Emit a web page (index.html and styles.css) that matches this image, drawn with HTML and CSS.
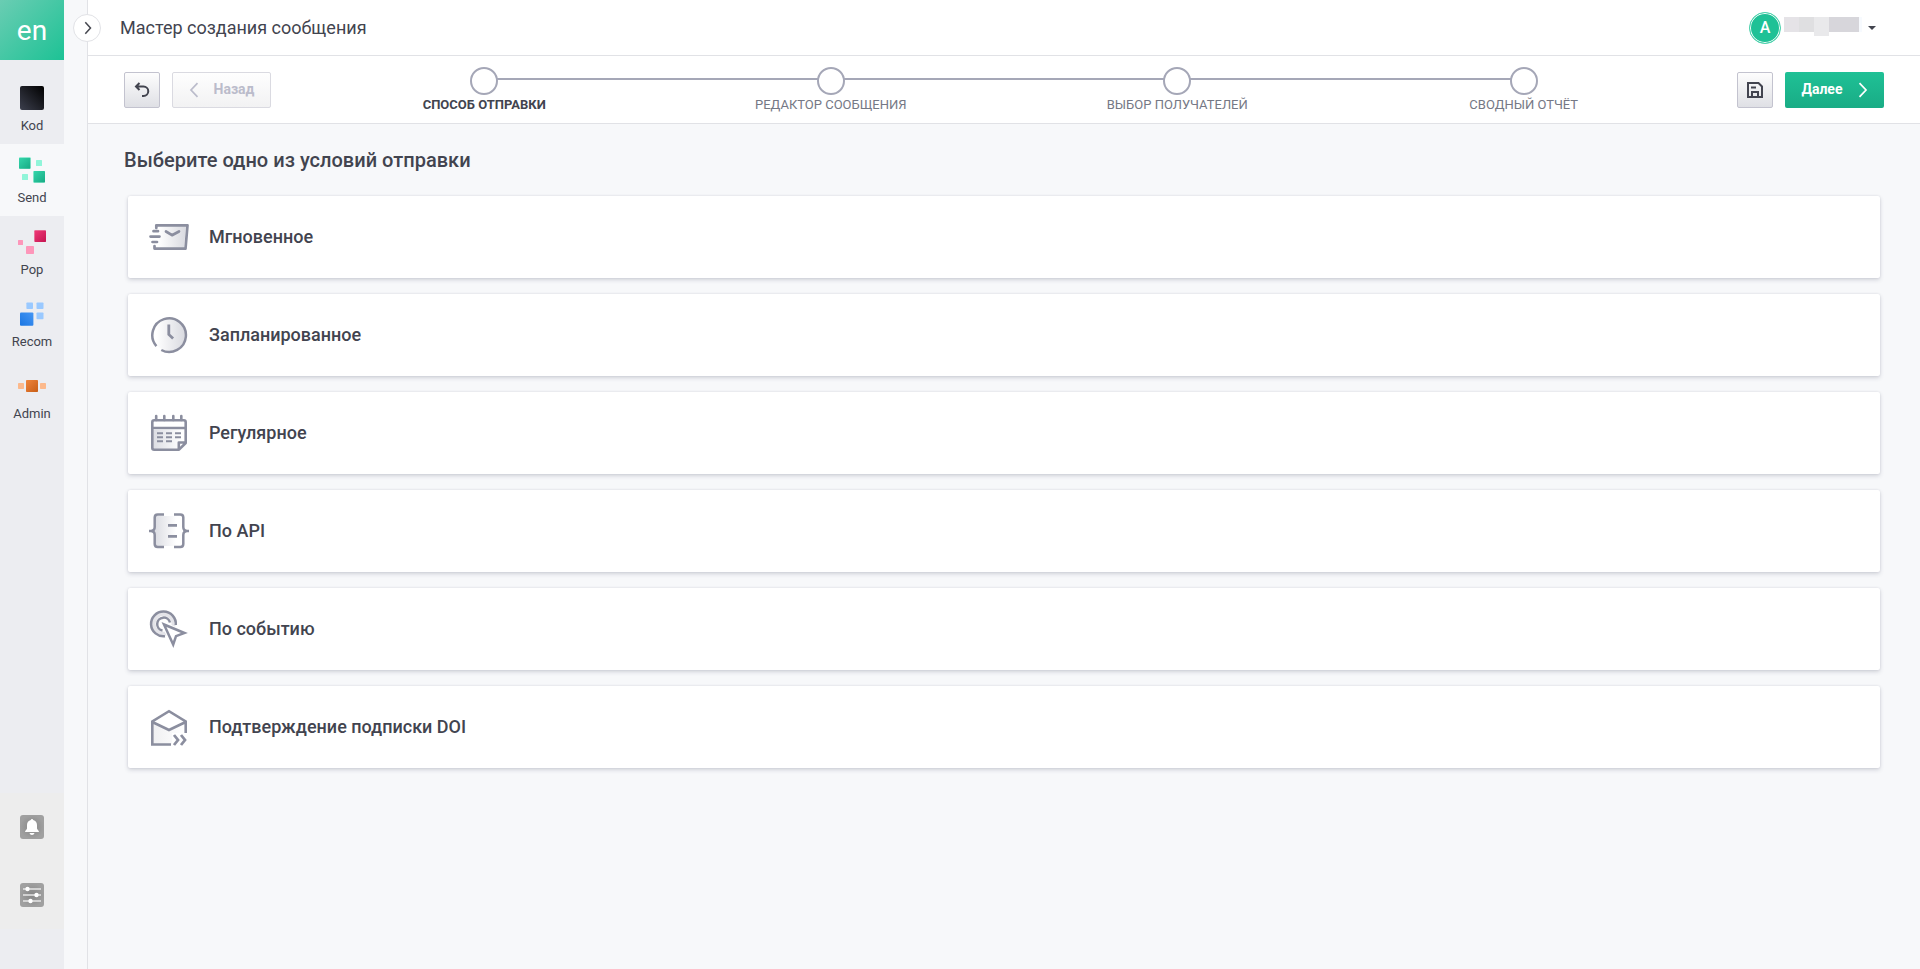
FILE: index.html
```html
<!DOCTYPE html>
<html lang="ru">
<head>
  <meta charset="UTF-8">
  <meta name="viewport" content="width=device-width, initial-scale=1.0">
  <title>Мастер создания сообщения</title>
  <link rel="stylesheet" href="styles.css">
</head>
<body>
  <!-- shared gradients -->
  <svg class="defs" width="0" height="0">
    <defs>
      <linearGradient id="fade-right"><stop offset="0.1" stop-color="#fff"/><stop offset="1" stop-color="#d9dae0"/></linearGradient>
      <linearGradient id="fade-left"><stop offset="0" stop-color="#dcdde3"/><stop offset="0.9" stop-color="#fff"/></linearGradient>
      <linearGradient id="fade-soft"><stop offset="0" stop-color="#f0f0f2"/><stop offset="1" stop-color="#fff"/></linearGradient>
      <linearGradient id="black" x1="0" y1="1" x2="1" y2="0"><stop offset="0" stop-color="#3c3f4d"/><stop offset="1" stop-color="#000"/></linearGradient>
      <linearGradient id="green" x1="0" y1="0" x2="1" y2="1"><stop offset="0" stop-color="#35d6ab"/><stop offset="1" stop-color="#17ab84"/></linearGradient>
      <linearGradient id="pink" x1="0" y1="0" x2="1" y2="1"><stop offset="0" stop-color="#f03a78"/><stop offset="1" stop-color="#c41450"/></linearGradient>
      <linearGradient id="blue" x1="0" y1="1" x2="1" y2="0"><stop offset="0" stop-color="#1a76e2"/><stop offset="1" stop-color="#4596f4"/></linearGradient>
      <linearGradient id="orange" x1="0" y1="0" x2="1" y2="1"><stop offset="0" stop-color="#ef843c"/><stop offset="1" stop-color="#c85e17"/></linearGradient>
      <radialGradient id="gray"><stop offset="0" stop-color="#868686"/><stop offset="1" stop-color="#a0a0a0"/></radialGradient>
    </defs>
  </svg>

  <aside class="sidebar">
    <a href="#" class="logo">en</a>
    <nav class="products">
      <a href="#" class="product">
        <svg width="28" height="28" viewBox="0 0 28 28"><rect x="2" y="2" width="24" height="24" rx="2" fill="url(#black)"/></svg>
        <span>Kod</span>
      </a>
      <a href="#" class="product active">
        <svg width="28" height="28" viewBox="0 0 28 28">
          <g fill="#b5f5e3"><rect x="1" y="1" width="12" height="12" rx="1"/><rect x="15" y="15" width="12" height="12" rx="1"/></g>
          <g fill="#90f5d9"><rect x="18" y="4" width="6" height="6" rx=".5"/><rect x="4" y="18" width="6" height="6" rx=".5"/></g>
          <g fill="url(#green)"><rect x="1" y="1.7" width="11.4" height="11" rx=".7"/><rect x="15.6" y="15" width="11.4" height="11.4" rx=".7"/></g>
        </svg>
        <span>Send</span>
      </a>
      <a href="#" class="product">
        <svg width="28" height="28" viewBox="0 0 28 28">
          <rect x="16" y="2" width="12" height="12" rx="1" fill="#e9a0b8"/>
          <rect x="16.6" y="2.6" width="11.4" height="11.4" rx=".7" fill="url(#pink)"/>
          <g fill="#fd96ba"><rect y="12" width="5" height="5" rx=".5"/><rect x="8" y="18" width="8" height="8" rx=".7"/></g>
        </svg>
        <span>Pop</span>
      </a>
      <a href="#" class="product">
        <svg width="28" height="28" viewBox="0 0 28 28">
          <g fill="#9ac9ff"><rect x="8.4" y="2.4" width="6.6" height="6.6" rx=".8"/><rect x="18.5" y="2.4" width="7" height="6.6" rx=".8"/><rect x="18.5" y="12.5" width="7" height="6.8" rx=".8"/></g>
          <rect x="2" y="12.5" width="13.4" height="13.3" rx="1" fill="url(#blue)"/>
        </svg>
        <span>Recom</span>
      </a>
      <a href="#" class="product">
        <svg width="28" height="28" viewBox="0 0 28 28">
          <g fill="#fcb98c"><rect y="11" width="6" height="6" rx=".7"/><rect x="22" y="11" width="6" height="6" rx=".7"/></g>
          <rect x="8" y="8" width="12" height="12" rx=".8" fill="url(#orange)"/>
        </svg>
        <span>Admin</span>
      </a>
    </nav>
    <div class="tools">
      <a href="#" class="tool">
        <svg width="24" height="24" viewBox="0 0 24 24">
          <rect width="24" height="24" rx="3" fill="url(#gray)"/>
          <path d="M12 4a1.2 1.2 0 0 1 1.2 1.1C15.6 5.700 17 7.500 17 10v3.500c0 1 2 2 2 3.500H5c0-1.500 2-2.500 2-3.500V10c0-2.500 1.400-4.300 3.800-4.900A1.200 1.200 0 0 1 12 4zM9.500 18h5c-.3 1.300-1.300 2-2.500 2s-2.200-.7-2.500-2z" fill="#fff"/>
        </svg>
      </a>
      <a href="#" class="tool">
        <svg width="24" height="24" viewBox="0 0 24 24">
          <rect width="24" height="24" rx="3" fill="url(#gray)"/>
          <path d="M3 6h18M3 12h18M3 18h18" stroke="#e6e6e6" stroke-width="1.600"/>
          <g fill="#fff"><circle cx="7.500" cy="6" r="2.200"/><circle cx="16.500" cy="12" r="2.200"/><circle cx="10.500" cy="18" r="2.200"/></g>
        </svg>
      </a>
    </div>
  </aside>

  <div class="submenu">
    <button class="expand" type="button">
      <svg width="8" height="14" viewBox="0 0 8 14"><path d="M1.300 1.200L6.500 7l-5.200 5.800" fill="none" stroke="#45474f" stroke-width="1.500"/></svg>
    </button>
  </div>

  <div class="page">
    <header class="header">
      <h1>Мастер создания сообщения</h1>
      <div class="user">
        <span class="avatar">A</span>
        <svg class="user-name" width="78" height="20" viewBox="0 0 78 20">
          <rect width="15" height="15" fill="#e5e3e7"/>
          <rect x="15" width="15" height="15" fill="#dfdfe1"/>
          <rect x="30" width="15" height="19" fill="#e9e9eb"/>
          <rect x="45" width="30" height="15" fill="#d7d6db"/>
          <rect x="75" width="3" height="15" fill="#f7fafe"/>
        </svg>
        <span class="caret"></span>
      </div>
    </header>

    <div class="toolbar">
      <button class="btn btn-icon" type="button">
        <svg width="16" height="16" viewBox="0 0 16 16"><path d="M5.500 1L2 4.500 5.500 8M2.300 4.500h7.200a4.700 4.700 0 0 1 0 9.500H8" fill="none" stroke="#42444f" stroke-width="2"/></svg>
      </button>
      <button class="btn btn-back" type="button" disabled>
        <svg width="10" height="16" viewBox="0 0 10 16"><path d="M8.500 1.200L2 8l6.500 6.800" fill="none" stroke="#bbbccb" stroke-width="1.700"/></svg>
        <span>Назад</span>
      </button>
      <ol class="steps">
        <li class="step current">Способ отправки</li>
        <li class="step">Редактор сообщения</li>
        <li class="step">Выбор получателей</li>
        <li class="step">Сводный отчёт</li>
      </ol>
      <button class="btn btn-icon btn-save" type="button">
        <svg width="16" height="16" viewBox="0 0 16 16">
          <path d="M1 1h10.500L15 4.500V15H1z" fill="none" stroke="#42444f" stroke-width="2"/>
          <path d="M4 5.500h5M5 15v-5h6v5" fill="none" stroke="#42444f" stroke-width="2"/>
        </svg>
      </button>
      <button class="btn btn-next" type="button">
        <span>Далее</span>
        <svg width="10" height="16" viewBox="0 0 10 16"><path d="M1.500 1.200L8 8l-6.500 6.800" fill="none" stroke="#fff" stroke-width="1.700"/></svg>
      </button>
    </div>

    <main class="content">
      <h2>Выберите одно из условий отправки</h2>
      <div class="cards">
        <a href="#" class="card">
          <svg class="icon" viewBox="0 0 40 40">
            <path d="M7.500 8.500H37L35 31.500H6z" fill="url(#fade-right)"/>
            <path d="M7.300 11V8.300h31.200L36.500 31.600H5.500V29M4.500 14.200h4.500M1.500 19.600h9M3.500 25h4.500M17 14.500l6 3.700 7-3.700" fill="none" stroke="#8b8e9f" stroke-width="2.700" stroke-linecap="round" stroke-linejoin="round"/>
          </svg>
          <span>Мгновенное</span>
        </a>
        <a href="#" class="card">
          <svg class="icon" viewBox="0 0 40 40">
            <circle cx="20" cy="20" r="16" fill="url(#fade-right)"/>
            <path d="M7.400 31.100A16.800 16.800 0 1 1 12.300 35" fill="none" stroke="#8b8e9f" stroke-width="2.500"/>
            <path d="M19.800 9.500v10l4.300 4" fill="none" stroke="#8b8e9f" stroke-width="2.800"/>
          </svg>
          <span>Запланированное</span>
        </a>
        <a href="#" class="card">
          <svg class="icon" viewBox="0 0 40 40">
            <path d="M4 17h32v12l-6 7H4z" fill="url(#fade-left)"/>
            <path d="M3.300 9.200q0-1.900 1.900-1.900h29.600q1.900 0 1.900 1.900V30l-6.700 6.700H5.200q-1.900 0-1.900-1.900zM3.300 15h33.400M36.500 29.500h-6.700v7" fill="none" stroke="#8b8e9f" stroke-width="2.600" stroke-linejoin="round"/>
            <path d="M7.200 3v4M15.300 3v4M24.300 3v4M32.300 3v4" stroke="#8b8e9f" stroke-width="2.600" stroke-linecap="round"/>
            <path d="M8 20.300h6M17 20.300h6M26 20.300h6M8 24.300h6M17 24.300h6M26 24.300h6M8 28.300h6M17 28.300h6" stroke="#8b8e9f" stroke-width="1.900"/>
          </svg>
          <span>Регулярное</span>
        </a>
        <a href="#" class="card">
          <svg class="icon" viewBox="0 0 40 40">
            <path d="M6 5h24v30H6z" fill="url(#fade-left)"/>
            <path d="M15 3.500H8.700q-3 0-3 3V16q0 4-4 4 4 0 4 4v9q0 3 3 3H15M25 3.500h6.300q3 0 3 3V16q0 4 4 4-4 0-4 4v9q0 3-3 3H25M0 20h3M37 20h3" fill="none" stroke="#8b8e9f" stroke-width="2.500"/>
            <path d="M19 14.300h9M19 25.300h9" stroke="#8b8e9f" stroke-width="2.800"/>
          </svg>
          <span>По API</span>
        </a>
        <a href="#" class="card">
          <svg class="icon" viewBox="0 0 40 40">
            <circle cx="14.600" cy="14.800" r="10" fill="none" stroke="#e4e4e9" stroke-width="4"/>
            <path d="M16 27.200A12.400 12.400 0 1 1 26.800 16M13.500 21.500A6.500 6.500 0 1 1 21 13.500" fill="none" stroke="#8b8e9f" stroke-width="2.500"/>
            <path d="M14.500 15L24.200 36.500 27 27.200 36.500 24z" fill="#fff" stroke="#fff" stroke-width="4"/>
            <path d="M15 15.500L24.200 35.500 27 27.200 35.500 24z" fill="#fff" stroke="#8b8e9f" stroke-width="2.500"/>
          </svg>
          <span>По событию</span>
        </a>
        <a href="#" class="card">
          <svg class="icon" viewBox="0 0 40 40">
            <path d="M4 15l16 8 15-8v11H23v11H4z" fill="url(#fade-soft)"/>
            <path d="M22 37.500H3.300V14.500L20 4.200l16.700 10.300V26M3.300 15L20 23l16.700-8" fill="none" stroke="#8b8e9f" stroke-width="2.600"/>
            <path d="M25 28l4 5-4 5M32 28l4 5-4 5" fill="none" stroke="#8b8e9f" stroke-width="2.800"/>
          </svg>
          <span>Подтверждение подписки DOI</span>
        </a>
      </div>
    </main>
  </div>
</body>
</html>
```
FILE: styles.css
```css
* {
  padding: 0;
  margin: 0;
  box-sizing: border-box;
}
body {
  display: flex;
  height: 100vh;
  font-family: Roboto, "Liberation Sans", sans-serif;
  color: #42444f;
  background-color: #f7f8fa;
}
a {
  color: inherit;
  text-decoration: none;
}
svg {
  flex: none;
}
.defs {
  position: absolute;
}

/* sidebar */
.sidebar {
  display: flex;
  flex-direction: column;
  width: 64px;
  background-color: #ecedf1;
}
.logo {
  height: 60px;
  line-height: 61px;
  text-align: center;
  font-size: 28px;
  color: #fff;
  background: linear-gradient(135deg, #6acdb3, #1dc295);
}
.products {
  margin-top: 12px;
}
.product {
  display: flex;
  flex-direction: column;
  align-items: center;
  height: 72px;
  padding-top: 12px;
  font-size: 13px;
  line-height: 16px;
}
.product span {
  margin-top: 6px;
}
.product.active {
  background-color: #f7f8fa;
}
.tools {
  margin-top: auto;
  margin-bottom: 40px;
  background-color: #ededed;
}
.tool {
  display: flex;
  justify-content: center;
  align-items: center;
  height: 68px;
}
.submenu {
  position: relative;
  width: 24px;
  border-right: 1px solid #e1e2e6;
}
.expand {
  position: absolute;
  top: 14px;
  left: 9px;
  width: 28px;
  height: 28px;
  display: flex;
  justify-content: center;
  align-items: center;
  padding-left: 1px;
  border: 1px solid #e1e2e6;
  border-radius: 50%;
  background-color: #fff;
}

/* header */
.page {
  flex: 1;
}
.header {
  display: flex;
  align-items: center;
  justify-content: space-between;
  height: 56px;
  padding: 0 44px 0 32px;
  background-color: #fff;
  border-bottom: 1px solid #e1e2e6;
}
.header h1 {
  font-size: 18px;
  font-weight: 400;
}
.user {
  display: flex;
  align-items: center;
}
.avatar {
  width: 32px;
  height: 32px;
  line-height: 29px;
  text-align: center;
  font-size: 16px;
  font-weight: 500;
  color: #fff;
  border: 1px solid #4ed3ae;
  border-radius: 50%;
  background-color: #1fc196;
  box-shadow: inset 0 0 0 1px #fff;
}
.user-name {
  margin: -2px 6px 0 3px;
}
.caret {
  border: 4px solid transparent;
  border-top-color: #42444f;
  border-bottom: 0;
}

/* toolbar */
.toolbar {
  display: flex;
  align-items: center;
  height: 68px;
  padding: 0 36px;
  background-color: #fff;
  border-bottom: 1px solid #e1e2e6;
}
.btn {
  display: flex;
  align-items: center;
  justify-content: center;
  height: 36px;
  font-family: inherit;
  font-size: 14px;
  font-weight: 700;
  border: 1px solid #c3c3cf;
  border-radius: 2px;
  background: linear-gradient(#fdfdfd, #dfe0e5);
}
.btn span {
  padding-bottom: 2px;
}
.btn-icon {
  width: 36px;
}
.btn-back {
  width: 99px;
  margin-left: 12px;
  gap: 15px;
  color: #bbbccb;
  border-color: #dadae1;
  background: linear-gradient(#fefefe, #f2f2f3);
}
.btn-next {
  width: 99px;
  margin-left: 12px;
  gap: 15px;
  color: #fff;
  border: none;
  background: linear-gradient(#1fc196, #19ac85);
}
.steps {
  flex: 1;
  display: flex;
  margin: 0 40px;
  list-style: none;
}
.step {
  position: relative;
  flex: 1;
  padding-top: 1px;
  text-align: center;
  font-size: 13px;
  line-height: 16px;
  text-transform: uppercase;
  color: #757885;
}
.step::before {
  content: "";
  display: block;
  width: 24px;
  height: 24px;
  margin: 0 auto 2px;
  border: 2px solid #a5a7b7;
  border-radius: 50%;
}
/* line to the next circle */
.step:not(:last-child)::after {
  content: "";
  position: absolute;
  top: 12px;
  left: calc(50% + 12px);
  width: calc(100% - 24px);
  height: 2px;
  background-color: #a5a7b7;
}
.step.current {
  font-weight: 700;
  color: #42444f;
}

/* content */
.content {
  padding: 24px 40px;
}
.content h2 {
  margin: 0 0 24px -4px;
  font-size: 20px;
  line-height: 24px;
  font-weight: 500;
  letter-spacing: .02px;
}
.cards {
  display: grid;
  gap: 16px;
}
.card {
  display: flex;
  align-items: center;
  gap: 20px;
  height: 82px;
  padding-left: 21px;
  font-size: 18px;
  font-weight: 500;
  background-color: #fff;
  border-radius: 2px;
  box-shadow: 0 2px 4px rgba(66, 68, 99, .2), 0 0 2px rgba(66, 68, 99, .15);
}
.card span {
  padding-bottom: 2px;
}
.icon {
  width: 40px;
  height: 40px;
}
```
